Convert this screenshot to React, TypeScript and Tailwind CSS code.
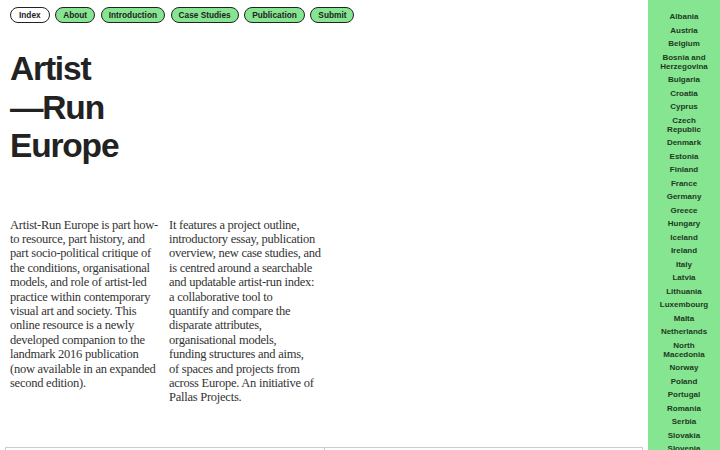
const navItems = ["Index", "About", "Introduction", "Case Studies", "Publication", "Submit"];

const countries = [
  "Albania",
  "Austria",
  "Belgium",
  "Bosnia and Herzegovina",
  "Bulgaria",
  "Croatia",
  "Cyprus",
  "Czech Republic",
  "Denmark",
  "Estonia",
  "Finland",
  "France",
  "Germany",
  "Greece",
  "Hungary",
  "Iceland",
  "Ireland",
  "Italy",
  "Latvia",
  "Lithuania",
  "Luxembourg",
  "Malta",
  "Netherlands",
  "North Macedonia",
  "Norway",
  "Poland",
  "Portugal",
  "Romania",
  "Serbia",
  "Slovakia",
  "Slovenia",
  "Spain",
  "Sweden",
];

const introLeft = [
  "Artist-Run Europe is part how-",
  "to resource, part history, and",
  "part socio-political critique of",
  "the conditions, organisational",
  "models, and role of artist-led",
  "practice within contemporary",
  "visual art and society. This",
  "online resource is a newly",
  "developed companion to the",
  "landmark 2016 publication",
  "(now available in an expanded",
  "second edition).",
];

const introRight = [
  "It features a project outline,",
  "introductory essay, publication",
  "overview, new case studies, and",
  "is centred around a searchable",
  "and updatable artist-run index:",
  "a collaborative tool to",
  "quantify and compare the",
  "disparate attributes,",
  "organisational models,",
  "funding structures and aims,",
  "of spaces and projects from",
  "across Europe. An initiative of",
  "Pallas Projects.",
];

const NavBar = () => {
  return (
    <nav className="flex items-center gap-[5.5px] px-[10px] pt-[7px]">
      {navItems.map((item, i) => (
        <a
          key={item}
          href="#"
          className={
            i === 0
              ? "h-[16px] px-[8px] flex items-center rounded-full border border-[#222] bg-white text-[8.3px] font-bold text-[#222]"
              : "h-[16px] px-[7px] flex items-center rounded-full border border-[#222] bg-[#86e590] text-[8.3px] font-bold text-[#222]"
          }
        >
          {item}
        </a>
      ))}
    </nav>
  );
};

const Column = ({ lines }: { lines: string[] }) => {
  return (
    <p className="flex flex-col">
      {lines.map((line) => (
        <span key={line} className="whitespace-nowrap">
          {line}
        </span>
      ))}
    </p>
  );
};

const Sidebar = () => {
  return (
    <aside className="w-[72px] shrink-0 bg-[#86e590] h-[450px] overflow-hidden pt-[12px]">
      <ul className="flex flex-col gap-[4.5px] px-[8px]">
        {countries.map((c) => (
          <li key={c} className="text-center text-[8px] leading-[9px] font-bold text-[#1f3a22]">
            {c}
          </li>
        ))}
      </ul>
    </aside>
  );
};

export default function App() {
  return (
    <div className="flex h-[450px] w-[720px] overflow-hidden bg-white font-['Liberation_Sans',Arial,sans-serif] text-[#222]">
      <main className="flex-1 flex flex-col">
        <NavBar />
        <h1 className="mt-[27px] px-[10px] text-[33.5px] leading-[38.5px] font-bold tracking-[-0.035em] text-[#222]">
          Artist
          <br />
          —Run
          <br />
          Europe
        </h1>
        <section className="mt-[52px] pl-[10px] grid grid-cols-[155px_155px] gap-x-[4px] font-['Liberation_Serif',serif] text-[12.5px] leading-[14.4px] tracking-[-0.02em] text-[#333]">
          <Column lines={introLeft} />
          <Column lines={introRight} />
        </section>
        <div className="mt-auto mx-[5px] grid grid-cols-2 h-[3px]">
          <div className="border-t border-l border-[#ccc]" />
          <div className="border-t border-l border-r border-[#ccc]" />
        </div>
      </main>
      <Sidebar />
    </div>
  );
}
